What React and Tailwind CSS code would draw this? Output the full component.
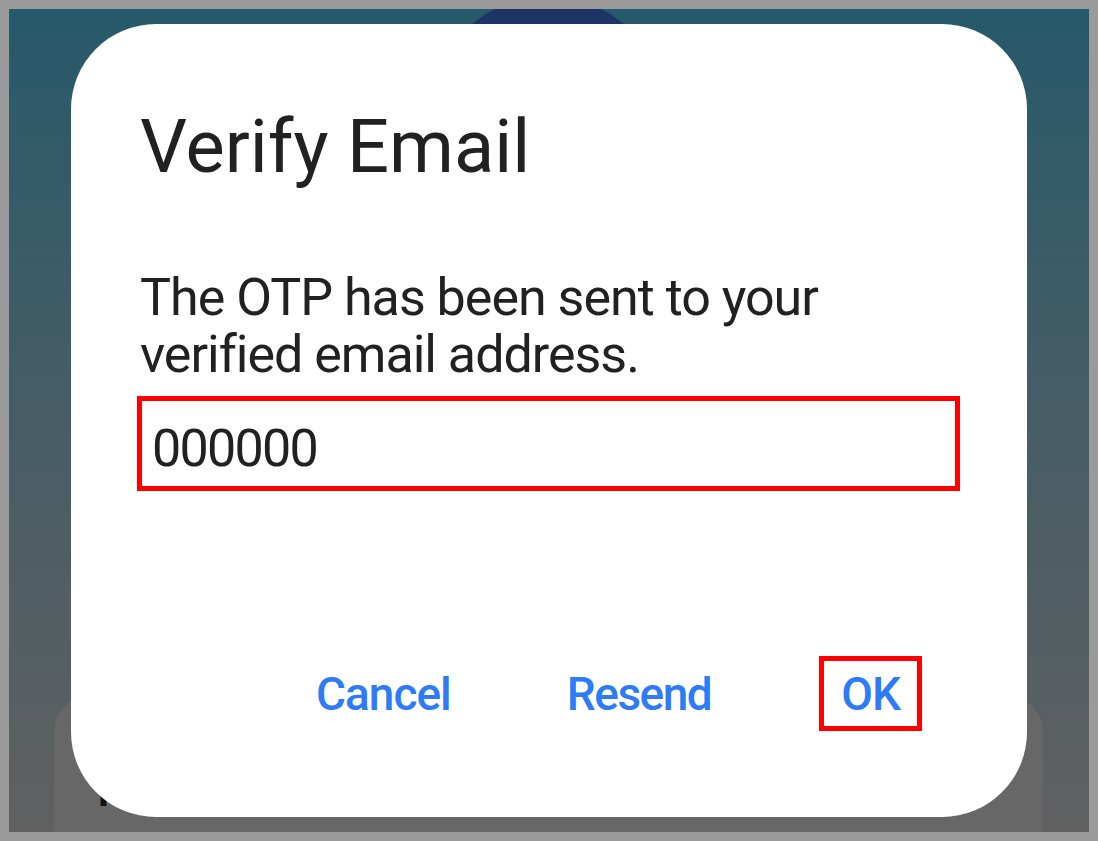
import React, { useState } from 'react';

const FONT = { fontFamily: 'Roboto, "Noto Sans", "Liberation Sans", sans-serif' };

export default function App() {
  const [otp, setOtp] = useState('000000');

  return (
    <div className="w-[1098px] h-[841px] bg-[#9a9a9a] p-[9px]" style={FONT}>
      {/* Page behind the dialog */}
      <div className="relative w-full h-full overflow-hidden flex flex-col items-center bg-gradient-to-b from-[#26596a] to-[#606060]">
        <div className="w-[232px] h-[232px] rounded-full bg-[#1c3566] -mt-[13px] ml-[-2px] shrink-0" />
        <div className="mt-auto w-[989px] h-[135px] ml-[-1px] rounded-t-[34px] bg-[#676767] pl-[44px] pt-[72px]">
          <p className="text-[40px] leading-[48px] font-bold text-[#111]">Please verify your email</p>
        </div>

        {/* Dialog */}
        <div className="absolute left-[62px] top-[15px] w-[956px] h-[793px] bg-white rounded-[85px] flex flex-col pl-[69px] pt-[86px]">
          <h1 className="text-[74px] leading-[74px] text-[#212121] font-normal">Verify Email</h1>
          <p className="mt-[85px] text-[52px] leading-[57px] text-[#212121] tracking-[-1px]">
            The OTP has been sent to your<br />verified email address.
          </p>
          <div className="mt-[13px] -ml-[3px] w-[823px] h-[95px] border-[5px] border-[#ff0000] flex items-center pl-[10px] pt-[10px]">
            <input
              value={otp}
              onChange={e => setOtp(e.target.value)}
              className="w-full bg-transparent outline-none text-[52px] leading-[57px] tracking-[-1.7px] text-[#212121]"
              style={FONT}
            />
          </div>

          <div className="mt-auto mb-[86px] flex items-center">
            <button className="ml-[176px] text-[46px] leading-[54px] tracking-[-1px] font-medium text-[#2d7cf6]" style={FONT}>Cancel</button>
            <button className="ml-[116px] text-[46px] leading-[54px] tracking-[-1.5px] font-medium text-[#2d7cf6]" style={FONT}>Resend</button>
            <button className="ml-[108px] h-[75px] px-[17px] border-[5px] border-[#ff0000] text-[46px] leading-[54px] tracking-[-1px] font-medium text-[#2d7cf6]" style={FONT}>OK</button>
          </div>
        </div>
      </div>
    </div>
  );
}
